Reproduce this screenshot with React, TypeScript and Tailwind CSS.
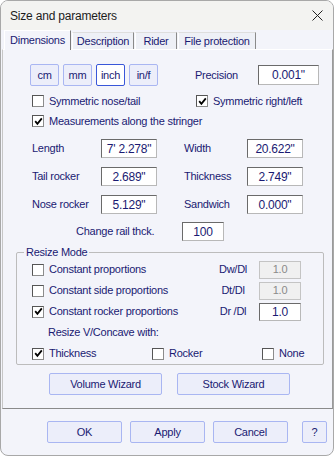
import React from 'react';
import clsx from 'clsx';

// Boîte de dialogue "Size and parameters"

function Check({ checked }: { checked?: boolean }) {
  return (
    <span className="w-[12px] h-[12px] bg-white border border-t-[#555] border-l-[#555] border-r-[#8c8c8c] border-b-[#8c8c8c] flex items-center justify-center shrink-0">
      {checked && (
        <svg width="9" height="9" viewBox="0 0 9 9">
          <path d="M1.2 4.2 L3.4 6.8 L7.8 1.4" stroke="#000" strokeWidth="1.8" fill="none" />
        </svg>
      )}
    </span>
  );
}

function Field({ value, className, disabled }: { value: string; className?: string; disabled?: boolean }) {
  return (
    <div
      className={clsx(
        'flex items-center justify-center border shrink-0',
        disabled
          ? 'bg-[#f0f0f0] border-[#c4c4c4] text-[#8a8a8a]'
          : 'bg-white border-t-[#6a6a6a] border-l-[#6a6a6a] border-r-[#b8b8b8] border-b-[#b8b8b8]',
        className
      )}
    >
      {value}
    </div>
  );
}

function Btn({ label, className, active }: { label: string; className?: string; active?: boolean }) {
  return (
    <div
      className={clsx(
        'flex items-center justify-center rounded-[2px] border shrink-0',
        active ? 'bg-white border-[#3957d9]' : 'bg-[#eceefa] border-[#a9b6f2]',
        className
      )}
    >
      {label}
    </div>
  );
}

function CheckLabel({ label, checked, className }: { label: string; checked?: boolean; className?: string }) {
  return (
    <div className={clsx('flex items-center gap-[5px] shrink-0', className)}>
      <Check checked={checked} />
      <span>{label}</span>
    </div>
  );
}

export default function App() {
  const dims = [
    ['Length', "7' 2.278\"", 'Width', '20.622"'],
    ['Tail rocker', '2.689"', 'Thickness', '2.749"'],
    ['Nose rocker', '5.129"', 'Sandwich', '0.000"'],
  ];

  const modes = [
    { label: 'Constant proportions', checked: false, ratio: 'Dw/Dl', value: '1.0', disabled: true },
    { label: 'Constant side proportions', checked: false, ratio: 'Dt/Dl', value: '1.0', disabled: true },
    { label: 'Constant rocker proportions', checked: true, ratio: 'Dr /Dl', value: '1.0', disabled: false },
  ];

  return (
    <div
      className="w-[334px] h-[456px] bg-white"
      style={{ fontFamily: '"Liberation Sans", Arial, sans-serif' }}
    >
      <div className="w-[334px] h-[456px] flex flex-col border border-[#a8a8a8] rounded-[8px] overflow-hidden bg-[#f3f4fa] text-[11px] tracking-[-0.25px] text-[#1a1a72]">
        {/* Barre de titre */}
        <div className="h-[29px] shrink-0 bg-[#f3f3f1] flex items-center justify-between pl-[9px] pr-[10px]">
          <span className="text-[12px] tracking-[-0.2px] text-[#1c1c1c]">Size and parameters</span>
          <svg width="11" height="11" viewBox="0 0 11 11">
            <path d="M0.5 0.5 L10.5 10.5 M10.5 0.5 L0.5 10.5" stroke="#222" strokeWidth="1" />
          </svg>
        </div>

        {/* Onglets */}
        <div className="h-[19px] shrink-0 flex items-end pl-[3px] relative z-10">
          <div className="h-[20px] mb-[-1px] w-[67px] flex items-center justify-center bg-[#f3f4fa] border border-b-0 border-l-white border-t-white border-r-[#7a7a7a]">
            Dimensions
          </div>
          <div className="h-[17px] w-[62px] ml-[1px] flex items-center justify-center bg-[#eef0f6] border border-b-0 border-l-white border-t-[#dedede] border-r-[#8a8a8a]">
            Description
          </div>
          <div className="h-[17px] w-[42px] ml-[1px] flex items-center justify-center bg-[#eef0f6] border border-b-0 border-l-white border-t-[#dedede] border-r-[#8a8a8a]">
            Rider
          </div>
          <div className="h-[17px] w-[78px] ml-[1px] flex items-center justify-center bg-[#eef0f6] border border-b-0 border-l-white border-t-[#dedede] border-r-[#8a8a8a]">
            File protection
          </div>
        </div>

        {/* Panneau */}
        <div className="ml-[1px] w-[331px] shrink-0 flex flex-col border border-t-white border-l-[#c6c6c6] border-r-[#9a9a9a] border-b-[#8a8a8a] pb-[13px]">
          <div className="flex items-center h-[22px] mt-[14px] pl-[27px]">
            <div className="flex gap-[4px]">
              <Btn label="cm" className="w-[29px] h-[22px]" />
              <Btn label="mm" className="w-[29px] h-[22px]" />
              <Btn label="inch" className="w-[29px] h-[22px]" active />
              <Btn label="in/f" className="w-[29px] h-[22px]" />
            </div>
            <span className="ml-[37px] w-[63px]">Precision</span>
            <Field value={'0.001"'} className="w-[61px] h-[20px] text-[12px]" />
          </div>

          <div className="flex items-center h-[16px] mt-[7px] pl-[29px]">
            <CheckLabel label="Symmetric nose/tail" className="w-[164px]" />
            <CheckLabel label="Symmetric right/left" checked />
          </div>

          <div className="flex items-center h-[16px] mt-[4px] pl-[29px]">
            <CheckLabel label="Measurements along the stringer" checked />
          </div>

          <div className="flex flex-col gap-[9px] mt-[10px]">
            {dims.map((row) => (
              <div key={row[0]} className="flex items-center h-[19px] pl-[29px]">
                <span className="w-[69px]">{row[0]}</span>
                <Field value={row[1]} className="w-[56px] h-[19px] text-[12px]" />
                <span className="ml-[27px] w-[63px]">{row[2]}</span>
                <Field value={row[3]} className="w-[56px] h-[19px] text-[12px]" />
              </div>
            ))}
          </div>

          <div className="flex items-center h-[19px] mt-[8px] pl-[73px]">
            <span className="w-[106px]">Change rail thck.</span>
            <Field value="100" className="w-[42px] h-[19px] text-[12px]" />
          </div>

          {/* Resize Mode */}
          <fieldset className="mt-[4px] ml-[13px] w-[308px] border border-[#bcbcbc] rounded-[2px]">
            <legend className="ml-[7px] px-[2px] leading-[14px]">Resize Mode</legend>
            <div className="flex flex-col pl-[15px]">
              {modes.map((m) => (
                <div key={m.label} className="flex items-center h-[21px]">
                  <CheckLabel label={m.label} checked={m.checked} className="w-[179px]" />
                  <span className="w-[44px] text-center">{m.ratio}</span>
                  <Field
                    value={m.value}
                    disabled={m.disabled}
                    className={clsx('ml-[4px] w-[42px] h-[18px]', m.disabled ? 'text-[11px]' : 'text-[12px]')}
                  />
                </div>
              ))}
              <div className="flex items-center h-[21px] pl-[16px]">Resize V/Concave with:</div>
              <div className="flex items-center h-[21px]">
                <CheckLabel label="Thickness" checked className="w-[120px]" />
                <CheckLabel label="Rocker" className="w-[110px]" />
                <CheckLabel label="None" />
              </div>
            </div>
          </fieldset>

          <div className="flex gap-[15px] mt-[8px] pl-[46px]">
            <Btn label="Volume Wizard" className="w-[113px] h-[22px]" />
            <Btn label="Stock Wizard" className="w-[113px] h-[22px]" />
          </div>
        </div>

        {/* Boutons du bas */}
        <div className="flex mt-[12px] pl-[46px]">
          <Btn label="OK" className="w-[75px] h-[22px]" />
          <Btn label="Apply" className="w-[75px] h-[22px] ml-[8px]" />
          <Btn label="Cancel" className="w-[75px] h-[22px] ml-[8px]" />
          <Btn label="?" className="w-[25px] h-[22px] ml-[14px]" />
        </div>
      </div>
    </div>
  );
}
